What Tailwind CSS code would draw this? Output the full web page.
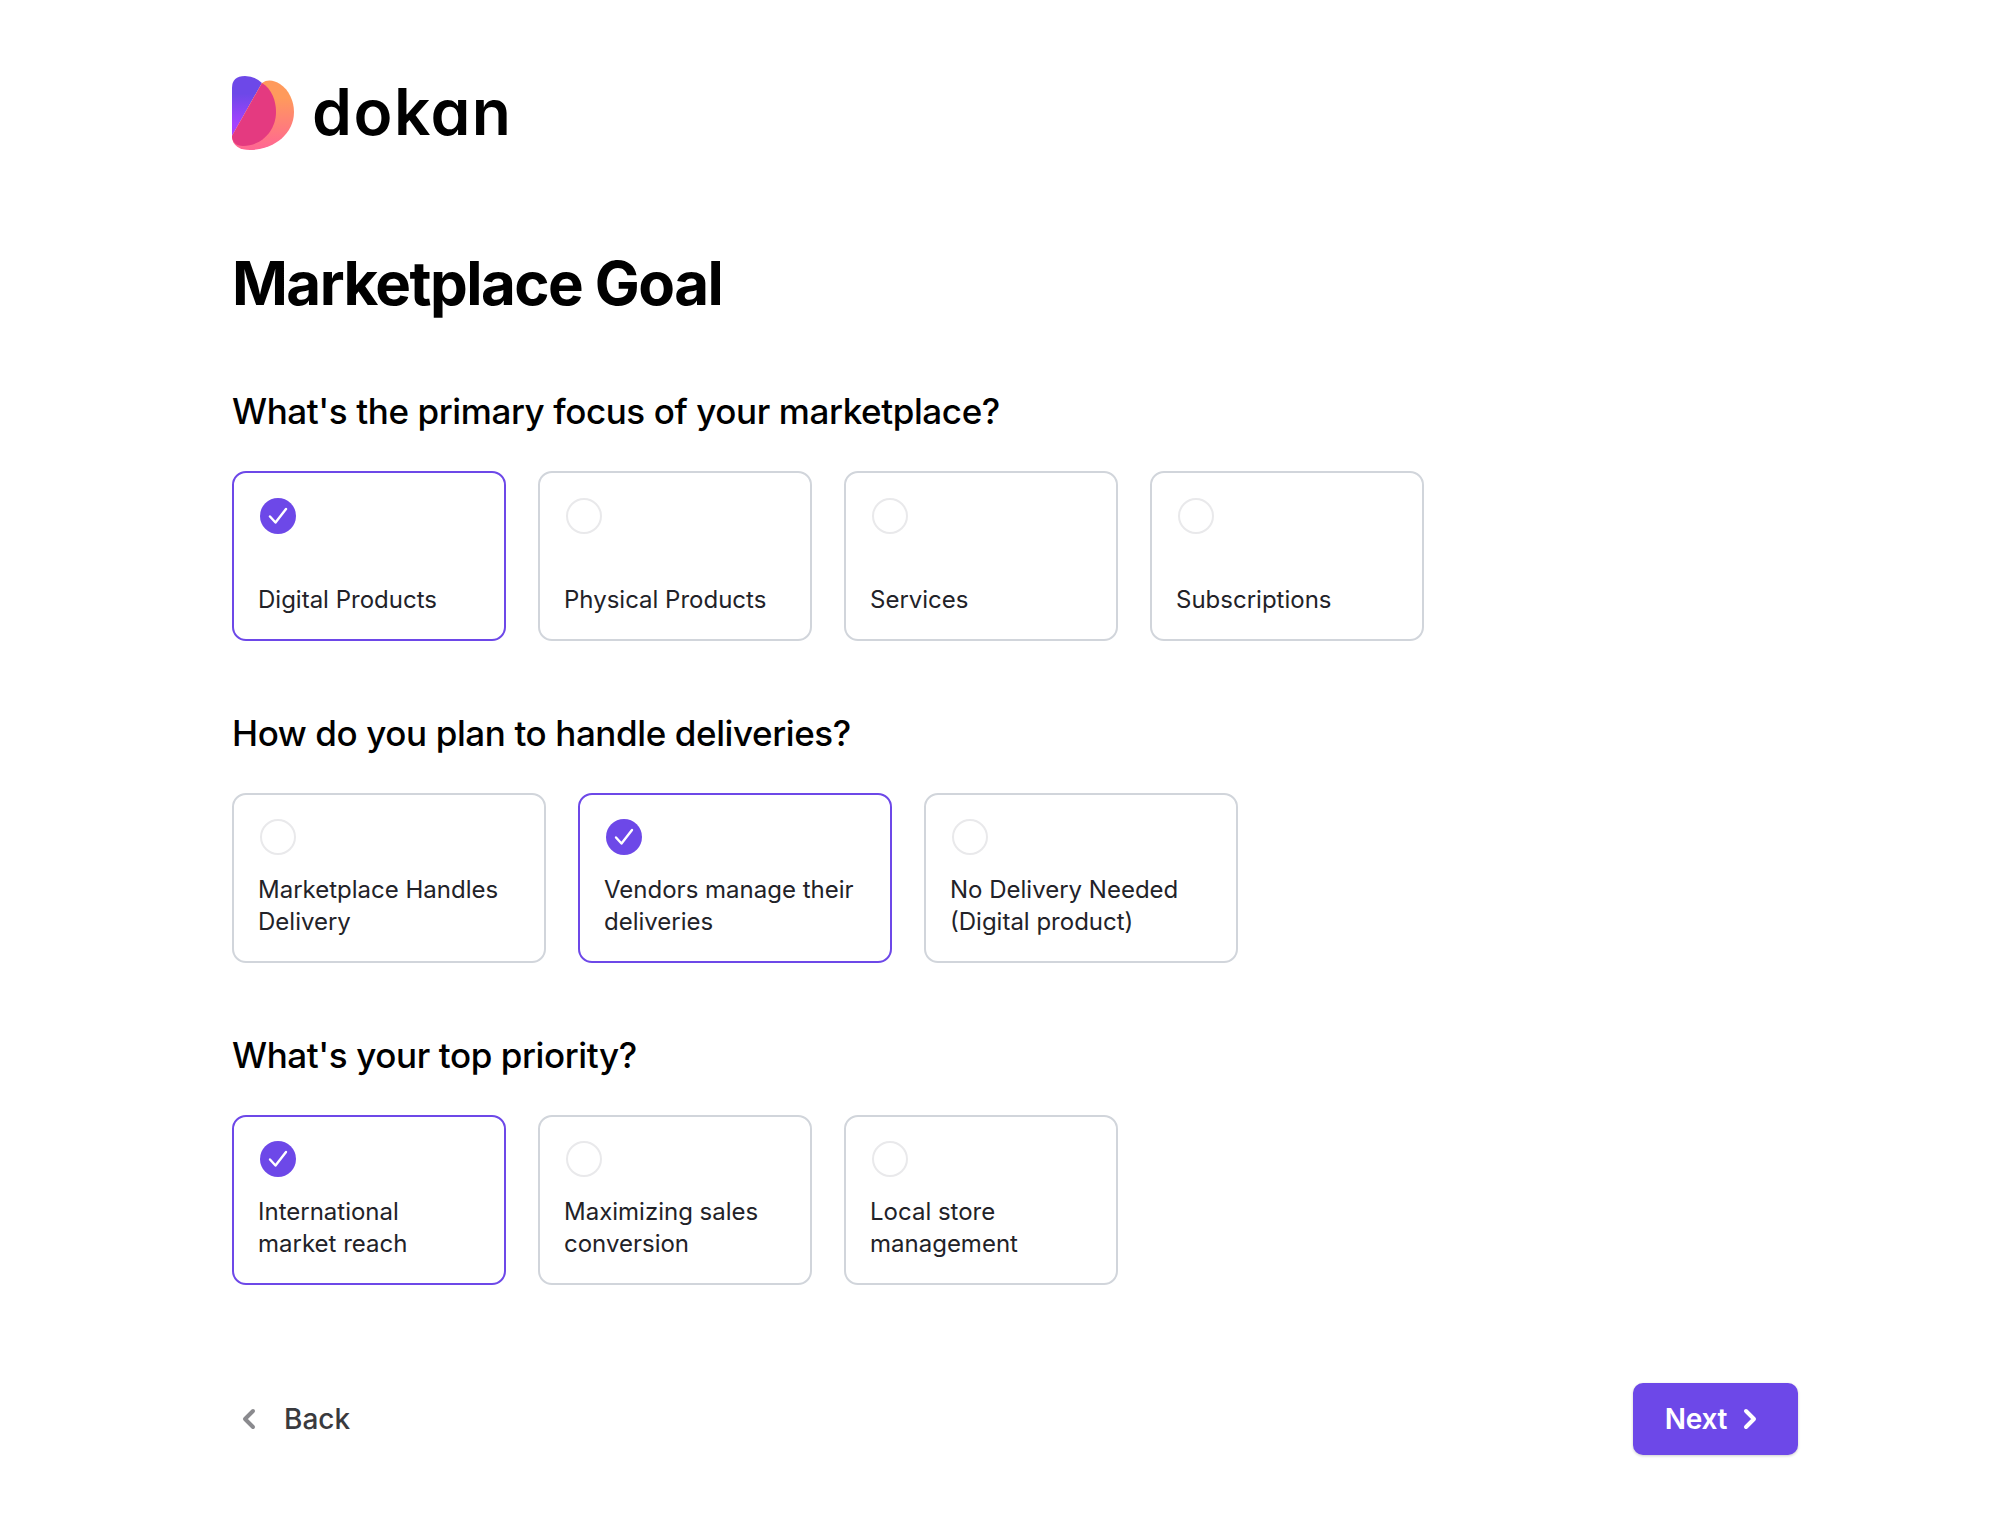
<!DOCTYPE html>
<html lang="en">
<head>
<meta charset="utf-8">
<script src="https://cdn.jsdelivr.net/npm/@tailwindcss/browser@4"></script>
<title>Marketplace Goal</title>
</head>
<body class="bg-white font-['Inter',sans-serif] text-[#0f0f12]">
<main class="w-[2012px] h-[1538px] pl-[232px] pr-[214px] pt-[76px]">
  <header class="flex items-center gap-[18px] h-[74px]">
    <svg class="w-[62px] h-[74px]" viewBox="232 76 62 74">
      <defs>
        <linearGradient id="a" x1="0" y1="0" x2="0" y2="1"><stop offset="0.3" stop-color="#6d48e8"/><stop offset="0.8" stop-color="#a542ff"/></linearGradient>
        <linearGradient id="b" x1="0" y1="0" x2="0" y2="1"><stop offset="0.25" stop-color="#ff9a5c"/><stop offset="1" stop-color="#ff6594"/></linearGradient>
      </defs>
      <path fill="url(#a)" d="M232 88Q232 76 245 76Q255 76 262 83L232 136Z"/>
      <path fill="url(#b)" d="M262 83C267 79 274 80 280 84C289 90 294 101 294 112C294 135 272 150 250 150C240 150 232 146 232 136Z"/>
      <path fill="#e43a80" d="M262 83C272 89 276 101 276 112C276 131 261 146 243 146C236 146 232 142 232 136Z"/>
    </svg>
    <span class="font-semibold text-[64px] leading-none text-black tracking-[1.5px] [font-feature-settings:'cv11'] mt-[-2px]">dokan</span>
  </header>

  <h1 class="mt-[97px] text-[60px] leading-[72px] font-bold tracking-[-1.55px] text-black">Marketplace Goal</h1>

  <section class="mt-[70px]">
    <h2 class="text-[35px] leading-[44px] font-medium tracking-[-0.4px] text-black">What's the primary focus of your marketplace?</h2>
    <div class="mt-[38px] flex gap-[32px]">
      <label class="w-[274px] h-[170px] pt-[25px] px-6 pb-[23px] rounded-[14px] border-2 border-[#6d48e8] flex flex-col justify-between">
        <span class="ml-[2px] w-9 h-9 rounded-full bg-[#6d48e8] flex items-center justify-center"><svg class="w-5 h-5" viewBox="0 0 20 20" fill="none" stroke="#fff" stroke-width="2.4" stroke-linecap="round" stroke-linejoin="round"><path d="M2 10.5l5.5 6L18 3"/></svg></span>
        <span class="text-2xl leading-8 text-[#222228]">Digital Products</span>
      </label>
      <label class="w-[274px] h-[170px] pt-[25px] px-6 pb-[23px] rounded-[14px] border-2 border-[#d1d5db] flex flex-col justify-between">
        <span class="ml-[2px] w-9 h-9 rounded-full border-2 border-[#e9e9eb]"></span>
        <span class="text-2xl leading-8 text-[#222228]">Physical Products</span>
      </label>
      <label class="w-[274px] h-[170px] pt-[25px] px-6 pb-[23px] rounded-[14px] border-2 border-[#d1d5db] flex flex-col justify-between">
        <span class="ml-[2px] w-9 h-9 rounded-full border-2 border-[#e9e9eb]"></span>
        <span class="text-2xl leading-8 text-[#222228]">Services</span>
      </label>
      <label class="w-[274px] h-[170px] pt-[25px] px-6 pb-[23px] rounded-[14px] border-2 border-[#d1d5db] flex flex-col justify-between">
        <span class="ml-[2px] w-9 h-9 rounded-full border-2 border-[#e9e9eb]"></span>
        <span class="text-2xl leading-8 text-[#222228]">Subscriptions</span>
      </label>
    </div>
  </section>

  <section class="mt-[70px]">
    <h2 class="text-[35px] leading-[44px] font-medium tracking-[-0.4px] text-black">How do you plan to handle deliveries?</h2>
    <div class="mt-[38px] flex gap-[32px]">
      <label class="w-[314px] h-[170px] pt-6 px-6 pb-[23px] rounded-[14px] border-2 border-[#d1d5db] flex flex-col justify-between">
        <span class="ml-[2px] w-9 h-9 rounded-full border-2 border-[#e9e9eb]"></span>
        <span class="text-2xl leading-8 text-[#222228]">Marketplace Handles Delivery</span>
      </label>
      <label class="w-[314px] h-[170px] pt-6 px-6 pb-[23px] rounded-[14px] border-2 border-[#6d48e8] flex flex-col justify-between">
        <span class="ml-[2px] w-9 h-9 rounded-full bg-[#6d48e8] flex items-center justify-center"><svg class="w-5 h-5" viewBox="0 0 20 20" fill="none" stroke="#fff" stroke-width="2.4" stroke-linecap="round" stroke-linejoin="round"><path d="M2 10.5l5.5 6L18 3"/></svg></span>
        <span class="text-2xl leading-8 text-[#222228]">Vendors manage their deliveries</span>
      </label>
      <label class="w-[314px] h-[170px] pt-6 px-6 pb-[23px] rounded-[14px] border-2 border-[#d1d5db] flex flex-col justify-between">
        <span class="ml-[2px] w-9 h-9 rounded-full border-2 border-[#e9e9eb]"></span>
        <span class="text-2xl leading-8 text-[#222228]">No Delivery Needed (Digital product)</span>
      </label>
    </div>
  </section>

  <section class="mt-[70px]">
    <h2 class="text-[35px] leading-[44px] font-medium tracking-[-0.4px] text-black">What's your top priority?</h2>
    <div class="mt-[38px] flex gap-[32px]">
      <label class="w-[274px] h-[170px] pt-6 px-6 pb-[23px] rounded-[14px] border-2 border-[#6d48e8] flex flex-col justify-between">
        <span class="ml-[2px] w-9 h-9 rounded-full bg-[#6d48e8] flex items-center justify-center"><svg class="w-5 h-5" viewBox="0 0 20 20" fill="none" stroke="#fff" stroke-width="2.4" stroke-linecap="round" stroke-linejoin="round"><path d="M2 10.5l5.5 6L18 3"/></svg></span>
        <span class="text-2xl leading-8 text-[#222228]">International market reach</span>
      </label>
      <label class="w-[274px] h-[170px] pt-6 px-6 pb-[23px] rounded-[14px] border-2 border-[#d1d5db] flex flex-col justify-between">
        <span class="ml-[2px] w-9 h-9 rounded-full border-2 border-[#e9e9eb]"></span>
        <span class="text-2xl leading-8 text-[#222228]">Maximizing sales conversion</span>
      </label>
      <label class="w-[274px] h-[170px] pt-6 px-6 pb-[23px] rounded-[14px] border-2 border-[#d1d5db] flex flex-col justify-between">
        <span class="ml-[2px] w-9 h-9 rounded-full border-2 border-[#e9e9eb]"></span>
        <span class="text-2xl leading-8 text-[#222228]">Local store management</span>
      </label>
    </div>
  </section>

  <footer class="mt-[98px] flex items-center justify-between h-[72px]">
    <button class="flex items-center gap-[28px] pl-[10px] text-[28px] font-medium text-[#3a3a3e]">
      <svg class="w-[14px] h-[22px]" viewBox="0 0 14 22" fill="none" stroke="#8a8a8e" stroke-width="4" stroke-linecap="round" stroke-linejoin="round"><path d="M11 3L3 11l8 8"/></svg>
      Back
    </button>
    <button class="w-[165px] h-[72px] pr-[9px] rounded-[10px] bg-[#6d48e8] shadow-[0_1px_3px_rgba(0,0,0,0.2)] flex items-center justify-center gap-[16px] text-[28px] tracking-[-0.3px] font-semibold text-white">
      Next
      <svg class="w-[14px] h-[22px]" viewBox="0 0 14 22" fill="none" stroke="#fff" stroke-width="4" stroke-linecap="round" stroke-linejoin="round"><path d="M3 3l8 8-8 8"/></svg>
    </button>
  </footer>
</main>
</body>
</html>
